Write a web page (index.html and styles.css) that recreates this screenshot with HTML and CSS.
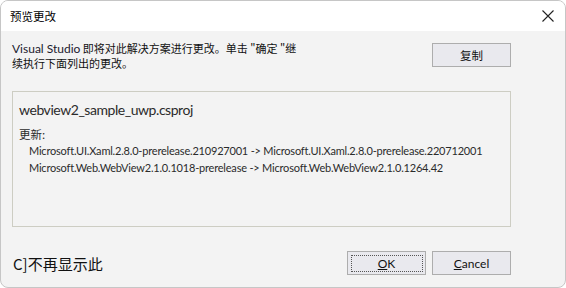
FILE: index.html
```html
<!DOCTYPE html>
<html lang="zh-CN">
<head>
    <meta charset="UTF-8">
    <title>预览更改</title>
    <link rel="stylesheet" href="styles.css">
</head>
<body>
    <div class="window">
        <div class="titlebar">
            <span class="title">预览更改</span>
            <svg class="close" width="12" height="12" viewBox="0 0 12 12">
                <path d="M0.5 0.5 L11.5 11.5 M11.5 0.5 L0.5 11.5" stroke="#222" stroke-width="1.1" fill="none"/>
            </svg>
        </div>

        <div class="content">
            <!-- message + copy -->
            <div class="intro">
                <p class="intro-text"><span class="latin">Visual Studio</span> 即将对此解决方案进行更改。单击 "确定 "继<br>续执行下面列出的更改。</p>
                <button class="btn copy-btn">复制</button>
            </div>

            <!-- changes list -->
            <div class="changes">
                <div class="project">webview2_sample_uwp.csproj</div>
                <div class="label">更新:</div>
                <div class="change">Microsoft.UI.Xaml.2.8.0-prerelease.210927001 -&gt; Microsoft.UI.Xaml.2.8.0-prerelease.220712001</div>
                <div class="change">Microsoft.Web.WebView2.1.0.1018-prerelease -&gt; Microsoft.Web.WebView2.1.0.1264.42</div>
            </div>

            <div class="footer">
                <span class="dont-show">C]不再显示此</span>
                <div class="actions">
                    <button class="btn ok-btn"><span class="focus"><u>O</u>K</span></button>
                    <button class="btn"><u>C</u>ancel</button>
                </div>
            </div>
        </div>
    </div>
</body>
</html>
```

FILE: styles.css
```css
body {
    margin: 0;
    background: #fff;
    font-family: "Lato", "Noto Sans CJK SC", sans-serif;
    color: #1a1a1a;
}

.window {
    width: 566px;
    height: 288px;
    box-sizing: border-box;
    border: 1px solid #c6c6c6;
    border-radius: 8px;
    overflow: hidden;
    background: #f3f3f3;
    display: flex;
    flex-direction: column;
}

.titlebar {
    height: 30px;
    flex-shrink: 0;
    background: #fff;
    display: flex;
    align-items: center;
    justify-content: space-between;
    padding: 0 10px 0 9px;
}

.title {
    font-family: "Noto Sans CJK SC", sans-serif;
    font-size: 11.5px;
    color: #000;
}

.close {
    margin-right: 1px;
}

.content {
    padding: 10px 54px 0 11px;
    display: flex;
    flex-direction: column;
}

.intro {
    display: flex;
    justify-content: space-between;
    align-items: flex-start;
}

.intro-text {
    margin: 0;
    white-space: nowrap;
    font-size: 11px;
    line-height: 15px;
    font-family: "Noto Sans CJK SC", sans-serif;
    color: #111;
}

.latin {
    font-family: "Lato", sans-serif;
    font-size: 12px;
    color: #1a1a2e;
}

.btn {
    width: 79px;
    height: 24px;
    box-sizing: border-box;
    border: 1px solid #adadad;
    background: #e9e9ee;
    font-family: "Lato", "Noto Sans CJK SC", sans-serif;
    font-size: 12px;
    color: #111;
    padding: 0;
    display: flex;
    align-items: center;
    justify-content: center;
}

.copy-btn {
    margin-top: 2px;
    font-family: "Noto Sans CJK SC", sans-serif;
    font-size: 11.5px;
}

.changes {
    margin-top: 20px;
    height: 136px;
    box-sizing: border-box;
    border: 1px solid #cdcdc3;
    padding: 8px 6px 7px;
    color: #2b2b2b;
}

.project {
    font-size: 14px;
    letter-spacing: -0.45px;
    line-height: 20px;
}

.label {
    margin-top: 6px;
    font-size: 11.5px;
    line-height: 16px;
    font-family: "Noto Sans CJK SC", sans-serif;
}

.change {
    padding-left: 10px;
    font-size: 11px;
    letter-spacing: -0.2px;
    line-height: 17px;
    white-space: nowrap;
}

.footer {
    margin-top: 24px;
    display: flex;
    align-items: center;
    justify-content: space-between;
    padding-left: 1px;
}

.dont-show {
    font-size: 15px;
    font-family: "Noto Sans CJK SC", sans-serif;
    color: #111;
}

.actions {
    display: flex;
    gap: 6px;
}

.ok-btn .focus {
    width: 72px;
    height: 17px;
    box-sizing: border-box;
    border: 1px dotted #555;
    display: flex;
    align-items: center;
    justify-content: center;
}
```
